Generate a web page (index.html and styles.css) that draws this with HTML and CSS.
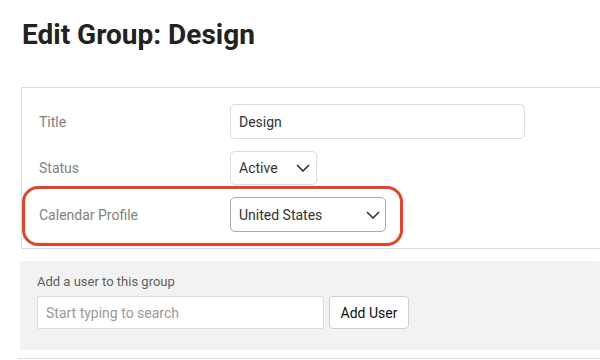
FILE: index.html
```html
<!DOCTYPE html>
<html lang="en">
<head>
    <meta charset="UTF-8">
    <meta name="viewport" content="width=device-width, initial-scale=1.0">
    <title>Edit Group: Design</title>
    <link rel="stylesheet" href="styles.css">
</head>
<body>
    <div class="page">
        <h1 class="page-title">Edit Group: Design</h1>

        <div class="form-panel">
            <div class="form-row">
                <label class="form-label">Title</label>
                <div class="text-input title-input">Design</div>
            </div>
            <div class="form-row">
                <label class="form-label">Status</label>
                <div class="select status-select">
                    <span>Active</span>
                    <svg class="chevron" width="14" height="8" viewBox="0 0 14 8"><polyline points="1,1 7,7 13,1" fill="none" stroke="#333" stroke-width="1.6"/></svg>
                </div>
            </div>
            <div class="form-row highlighted">
                <div class="highlight-ring"></div>
                <label class="form-label">Calendar Profile</label>
                <div class="select calendar-select">
                    <span>United States</span>
                    <svg class="chevron" width="14" height="8" viewBox="0 0 14 8"><polyline points="1,1 7,7 13,1" fill="none" stroke="#333" stroke-width="1.6"/></svg>
                </div>
            </div>
        </div>

        <div class="add-user-panel">
            <div class="add-user-label">Add a user to this group</div>
            <div class="add-user-controls">
                <div class="search-input">Start typing to search</div>
                <button class="add-button">Add User</button>
            </div>
        </div>

        <div class="next-section"></div>
    </div>
</body>
</html>
```

FILE: styles.css
```css
html, body {
    margin: 0;
    padding: 0;
    background-color: #fff;
    overflow: hidden;
}

body {
    font-family: Roboto, 'Liberation Sans', Arial, sans-serif;
    color: #333;
    width: 600px;
    height: 360px;
}

.page {
    padding-left: 21px;
}

.page-title {
    margin: 19px 0 36px 1px;
    font-size: 28px;
    line-height: 32px;
    font-weight: 700;
    color: #222;
}

/* panels run off the right edge, so no right border */
.form-panel {
    border: 1px solid #ddd;
    border-right: none;
    padding: 16px 0 16px 17px;
    display: flex;
    flex-direction: column;
    gap: 12px;
}

.form-row {
    display: grid;
    grid-template-columns: 191px auto;
    align-items: center;
    position: relative;
}

.form-label {
    font-size: 14px;
    color: #828282;
}

.text-input,
.select {
    box-sizing: border-box;
    background-color: #fff;
    border: 1px solid #dcdcdc;
    border-radius: 5px;
    font-size: 14px;
    color: #333;
    padding: 0 8px;
    display: flex;
    align-items: center;
}

.title-input {
    width: 295px;
    height: 35px;
}

.select {
    justify-content: space-between;
    padding-right: 6px;
}

.status-select {
    width: 87px;
    height: 34px;
}

.calendar-select {
    width: 156px;
    height: 35px;
    border-color: #a9a9a9;
    padding-right: 5px;
}

.chevron {
    display: block;
}

/* annotation ring drawn over the calendar row */
.highlight-ring {
    position: absolute;
    left: -17px;
    top: -11px;
    width: 381px;
    height: 60px;
    box-sizing: border-box;
    border: 3px solid #e8412b;
    border-radius: 16px;
    pointer-events: none;
}

.add-user-panel {
    margin-top: 12px;
    margin-left: -1px;
    background-color: #f2f2f2;
    border-radius: 2px;
    padding: 13px 0 21px 17px;
}

.add-user-label {
    font-size: 13px;
    line-height: 16px;
    color: #5f5f5f;
    margin-bottom: 6px;
}

.add-user-controls {
    display: flex;
    gap: 5px;
}

.search-input {
    box-sizing: border-box;
    width: 287px;
    height: 33px;
    background-color: #fff;
    border: 1px solid #ddd;
    border-radius: 2px;
    padding: 0 8px;
    display: flex;
    align-items: center;
    font-size: 14px;
    color: #9a9a9a;
}

.add-button {
    box-sizing: border-box;
    width: 80px;
    height: 33px;
    background-color: #fff;
    border: 1px solid #cfcfcf;
    border-radius: 4px;
    font-family: inherit;
    font-size: 14px;
    color: #111;
    padding: 0;
}

.next-section {
    margin-top: 8px;
    margin-left: -3px;
    border-top: 1px solid #ddd;
}
```
